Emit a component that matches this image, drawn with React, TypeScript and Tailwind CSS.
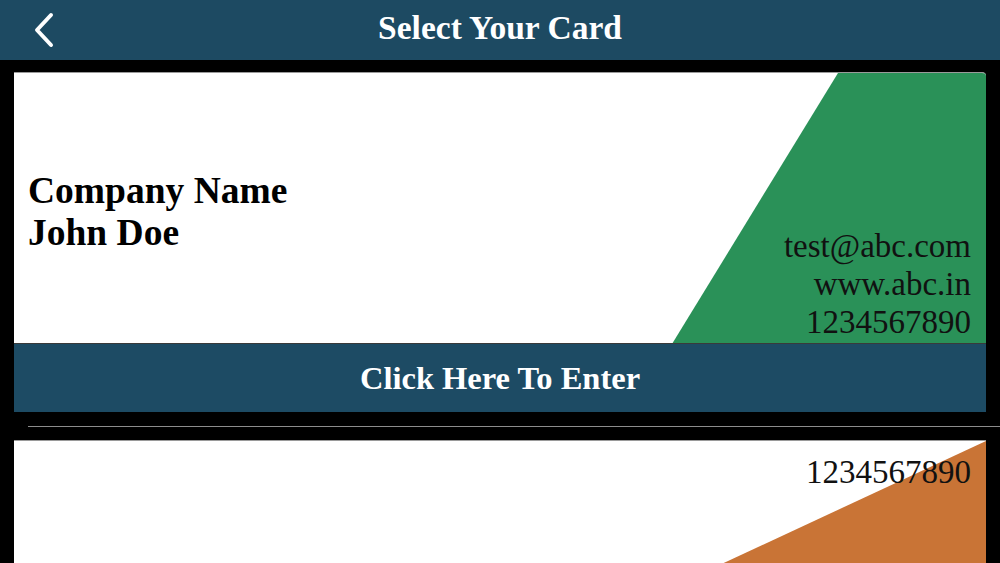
import React from 'react';

const serif = { fontFamily: '"Liberation Serif", "DejaVu Serif", serif' };

function BackIcon() {
  return (
    <svg width="24" height="36" viewBox="0 0 24 36" fill="none" className="block">
      <polyline
        points="19,3 5,18 19,33"
        stroke="white"
        strokeWidth="4"
        strokeLinecap="round"
        strokeLinejoin="round"
      />
    </svg>
  );
}

function Header() {
  return (
    <header className="relative flex h-[60px] items-center justify-center bg-[#1d4a62]">
      <button className="absolute left-[32px] top-[12px]">
        <BackIcon />
      </button>
      <h1 className="-mt-[4px] text-[33.5px] font-bold leading-none text-white" style={serif}>
        Select Your Card
      </h1>
    </header>
  );
}

function GreenCard() {
  return (
    <div className="relative flex h-[271px] justify-between overflow-hidden rounded-tr-[4px] border-t border-[#9a9a9a] bg-white">
      <svg className="absolute inset-0" width="972" height="271" viewBox="0 0 972 271">
        <polygon points="824,0 972,0 972,271 658,271" fill="#2a9158" />
      </svg>
      <div className="relative pl-[14px] pt-[97px] text-[37.5px] font-bold leading-[42px] text-black" style={serif}>
        <div>Company Name</div>
        <div>John Doe</div>
      </div>
      <div className="relative self-end pb-[2px] pr-[15px] text-right text-[33px] leading-[38px] text-[#111]" style={serif}>
        <div>test@abc.com</div>
        <div>www.abc.in</div>
        <div>1234567890</div>
      </div>
    </div>
  );
}

function OrangeCard() {
  return (
    <div className="relative h-[200px] overflow-hidden border-t border-[#9a9a9a] bg-white">
      <svg className="absolute inset-0" width="972" height="200" viewBox="0 0 972 200">
        <polygon points="972,0 972,200 542,200" fill="#c97436" />
      </svg>
      <div className="relative pr-[15px] pt-[12px] text-right text-[33px] leading-[38px] text-[#111]" style={serif}>
        1234567890
      </div>
    </div>
  );
}

export default function App() {
  return (
    <div className="h-[563px] w-[1000px] overflow-hidden bg-black">
      <Header />
      <main className="px-[14px] pt-[12px]">
        <GreenCard />
        <button className="flex h-[69px] w-full items-center justify-center border-t border-[#3a3a3a] bg-[#1d4b64]">
          <span className="text-[32.5px] font-bold leading-none text-white" style={serif}>
            Click Here To Enter
          </span>
        </button>
        <div className="-mr-[14px] ml-[14px] mt-[14px] h-px bg-[#8c8c8c]" />
        <div className="pt-[13px]">
          <OrangeCard />
        </div>
      </main>
    </div>
  );
}
